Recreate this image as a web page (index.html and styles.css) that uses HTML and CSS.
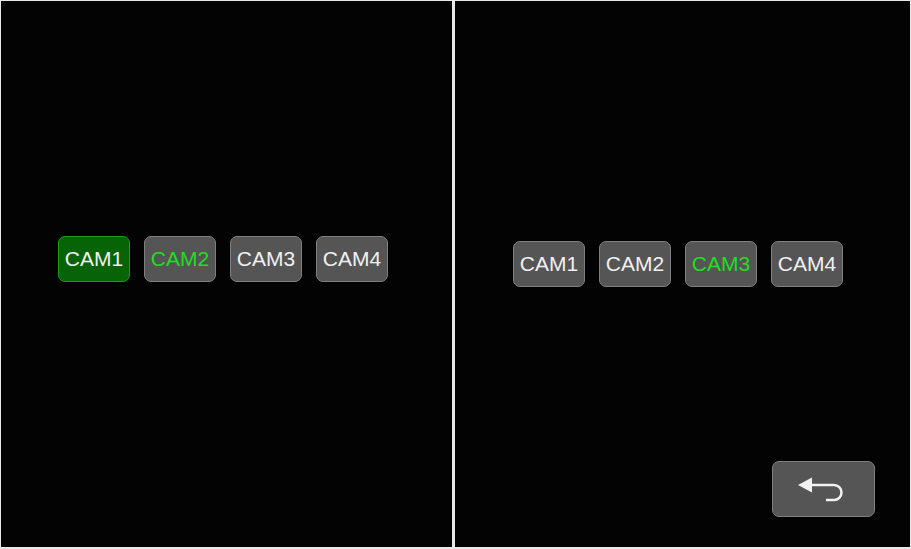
FILE: index.html
```html
<!DOCTYPE html>
<html>
<head>
<meta charset="utf-8">
<link rel="stylesheet" href="styles.css">
</head>
<body>
<div class="screen">
  <div class="panel panel-left">
    <div class="cams">
      <div class="cam cam-active">CAM1</div>
      <div class="cam cam-selected">CAM2</div>
      <div class="cam">CAM3</div>
      <div class="cam">CAM4</div>
    </div>
  </div>
  <div class="panel panel-right">
    <div class="cams">
      <div class="cam">CAM1</div>
      <div class="cam">CAM2</div>
      <div class="cam cam-selected">CAM3</div>
      <div class="cam">CAM4</div>
    </div>
    <div class="back">
      <svg width="50" height="30" viewBox="0 0 50 30">
        <polygon points="1,11 15,3.5 15,18.5" fill="#f2f2f2"/>
        <path d="M14 11 H37 A7.5 7.5 0 0 1 37 26 H29" fill="none" stroke="#f2f2f2" stroke-width="2.5"/>
      </svg>
    </div>
  </div>
</div>
</body>
</html>
```

FILE: styles.css
```css
html, body {
  margin: 0;
  padding: 0;
  background: #e8e8e8;
}
.screen {
  width: 911px;
  height: 549px;
  box-sizing: border-box;
  padding: 1px 1px 2px 1px;
  display: flex;
  gap: 3px;
}
.panel {
  background: #030303;
  display: flex;
  flex-direction: column;
}
.panel-left {
  width: 451px;
  padding: 235px 0 0 57px;
  box-sizing: border-box;
}
.panel-right {
  flex: 1;
  padding: 240px 0 0 58px;
  box-sizing: border-box;
}
.cams {
  display: flex;
  gap: 14px;
}
.cam {
  width: 72px;
  height: 46px;
  box-sizing: border-box;
  border: 1.5px solid #808080;
  border-radius: 7px;
  background: #555555;
  color: #f0f0f0;
  font-family: "Liberation Sans", Arial, sans-serif;
  font-size: 21px;
  display: flex;
  align-items: center;
  justify-content: center;
}
.cam-active {
  background: #066306;
  border-color: #1f9a1f;
}
.cam-selected {
  color: #22dd22;
}
.back {
  margin-top: auto;
  margin-bottom: 30px;
  margin-right: 35px;
  align-self: flex-end;
  width: 103px;
  height: 56px;
  box-sizing: border-box;
  border: 1.5px solid #808080;
  border-radius: 7px;
  background: #555555;
  display: flex;
  align-items: center;
  justify-content: center;
}
.back svg {
  display: block;
  margin-left: -4px;
}
```
